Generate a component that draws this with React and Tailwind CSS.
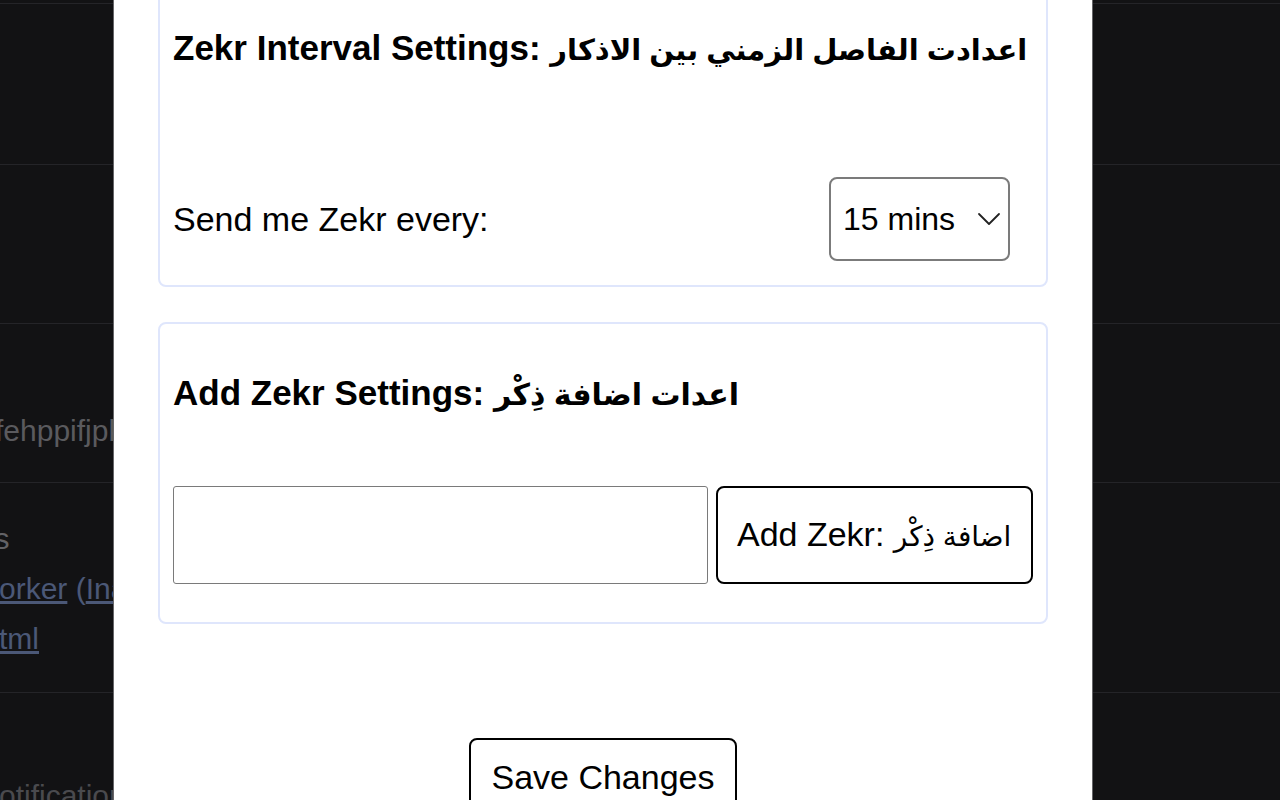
import React from 'react'

// Dimmed extension page behind the options modal
function BackgroundPage() {
  return (
    <div className="flex flex-col pt-[3px]">
      <div className="h-[161px] border-t border-[#242428]" />
      <div className="h-[159px] border-t border-[#242428]" />
      <div className="h-[159px] border-t border-[#242428] pt-[90px]">
        <div className="w-[113px] overflow-hidden">
          <p className="-ml-[5px] whitespace-nowrap text-[30px] leading-[34px] text-[#5a5a5e]">fehppifjpk</p>
        </div>
      </div>
      <div className="h-[210px] border-t border-[#242428] pt-[31px]">
        <div className="w-[113px] overflow-hidden">
          <p className="-ml-[70px] whitespace-nowrap text-[30px] leading-[50px] text-[#626266]">Views</p>
          <p className="-ml-[1px] whitespace-nowrap text-[30px] leading-[50px] text-[#4b5877]">
            <span className="underline">orker</span> (<span className="underline">Inactive</span>)
          </p>
          <p className="-ml-[1px] whitespace-nowrap text-[30px] leading-[50px] text-[#4b5877] underline">tml</p>
        </div>
      </div>
      <div className="border-t border-[#242428] pt-[86px]">
        <div className="w-[113px] overflow-hidden">
          <p className="-ml-[1px] whitespace-nowrap text-[30px] leading-[34px] text-[#4a4a4e]">otifications</p>
        </div>
      </div>
    </div>
  )
}

function Card({ className = '', children }) {
  return (
    <div className={`rounded-[8px] border-2 border-[#dfe6fc] bg-white px-[13px] pt-[49px] ${className}`}>
      {children}
    </div>
  )
}

function IntervalSelect() {
  return (
    <div className="relative mr-[23px]">
      <select
        defaultValue="15"
        className="h-[84px] w-[181px] appearance-none rounded-[8px] border-2 border-[#7b7b7b] bg-white pl-[12px] text-[32px] text-black outline-none"
      >
        <option value="5">5 mins</option>
        <option value="15">15 mins</option>
        <option value="30">30 mins</option>
        <option value="60">60 mins</option>
      </select>
      <svg
        className="pointer-events-none absolute right-[9px] top-1/2 -translate-y-1/2"
        width="24"
        height="14"
        viewBox="0 0 24 14"
        fill="none"
        stroke="#222"
        strokeWidth="1.8"
        strokeLinecap="round"
        strokeLinejoin="round"
      >
        <path d="M2 2l10 10L22 2" />
      </svg>
    </div>
  )
}

function SettingsModal() {
  return (
    <div className="absolute inset-y-0 left-[113px] w-[980px] overflow-hidden border-x border-[#666669] bg-white">
      <div className="flex flex-col px-[44px] text-black">
        {/* Interval settings */}
        <Card className="-mt-[23px] pb-[24px]">
          <h2 className="whitespace-nowrap text-[35px] font-bold leading-[40px]">
            Zekr Interval Settings: <span className="text-[29px]">اعدادت الفاصل الزمني بين الاذكار</span>
          </h2>
          <div className="mt-[107px] flex items-center justify-between">
            <label className="text-[34px] leading-[40px]">Send me Zekr every:</label>
            <IntervalSelect />
          </div>
        </Card>

        {/* Add zekr */}
        <Card className="mt-[35px] pb-[38px]">
          <h2 className="whitespace-nowrap text-[35px] font-bold leading-[40px]">
            Add Zekr Settings: <span className="text-[30px]">اعدات اضافة ذِكْر</span>
          </h2>
          <div className="mt-[71px] flex gap-[8px]">
            <input
              type="text"
              className="h-[98px] w-[535px] rounded-[3px] border-[1.5px] border-[#7a7a7a] px-3 text-[28px] outline-none"
            />
            <button className="flex-1 rounded-[8px] border-2 border-black bg-white pl-[19px] text-left text-[34px] leading-[40px]">
              Add Zekr: <span className="text-[28px]">اضافة ذِكْر</span>
            </button>
          </div>
        </Card>

        <button className="mt-[114px] self-center rounded-[8px] border-2 border-black bg-white px-[20px] py-[18px] text-[34px] leading-[39px]">
          Save Changes
        </button>
      </div>
    </div>
  )
}

export default function App() {
  return (
    <div className="relative h-[800px] w-full overflow-hidden bg-[#121214] font-['Liberation_Sans','DejaVu_Sans',sans-serif]">
      <BackgroundPage />
      <SettingsModal />
    </div>
  )
}
